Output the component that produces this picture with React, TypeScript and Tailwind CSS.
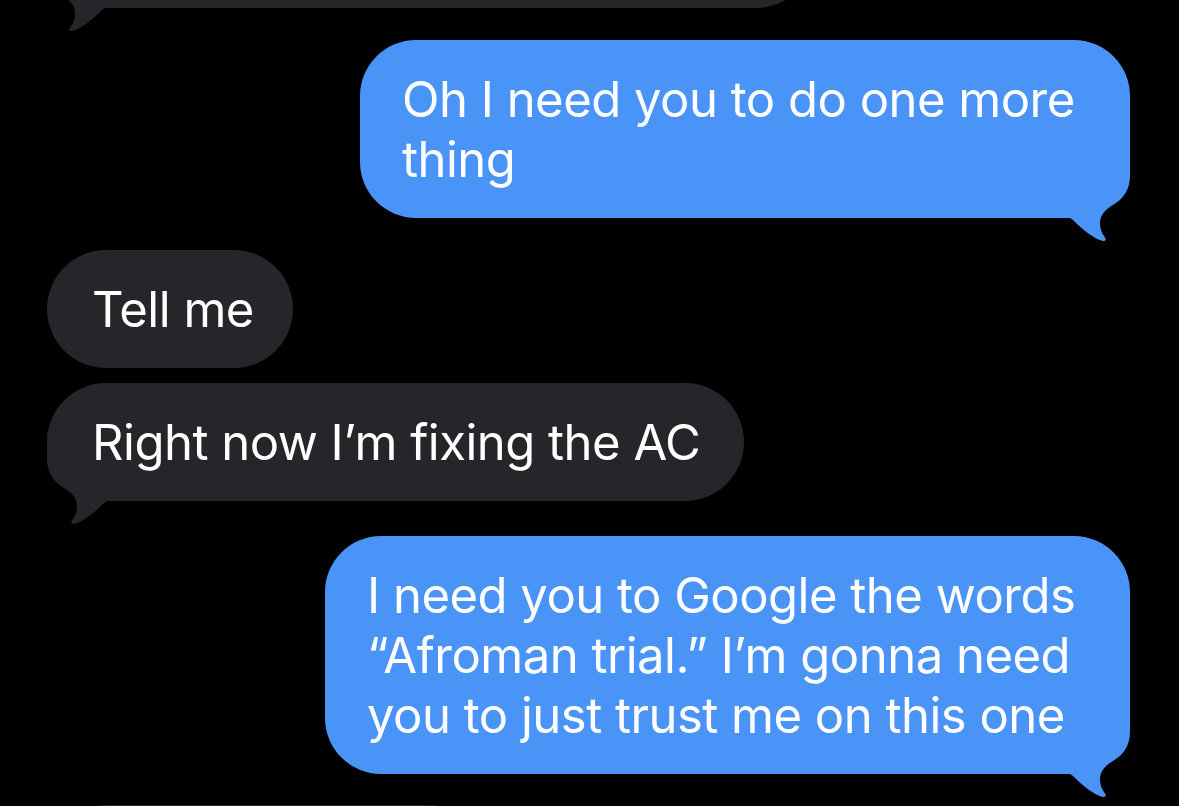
function Tail({ side, color }: { side: 'left' | 'right'; color: string }) {
  return (
    <svg
      width="60"
      height="92"
      viewBox="0 0 60 92"
      className={side === 'right' ? 'absolute right-0 bottom-[-24px]' : 'absolute left-0 bottom-[-24px]'}
    >
      <g transform={side === 'left' ? 'translate(60 0) scale(-1 1)' : 'translate(0 0)'}>
        <path
          d="M0 0 L60 0 L60 26 C60 40 53 49 43 55 C36 59 30 65 30 73 C30 79 32 84 35 87.5 C36.5 89.5 35.5 91.5 33 91 C24 89 13 80 3 70 L0 68 Z"
          fill={color}
        />
      </g>
    </svg>
  )
}

const BLUE = '#4a94f7'
const GRAY = '#262529'

function Sent({ lines, width, className = '' }: { lines: string[]; width: string; className?: string }) {
  return (
    <div className={`relative self-end ${width} ${className}`}>
      <div className="relative z-10 rounded-[56px] bg-[#4a94f7] px-[42px] pt-[30px] pb-[28px] text-white">
        {lines.map((l) => (
          <div key={l} className="whitespace-nowrap">{l}</div>
        ))}
      </div>
      <Tail side="right" color={BLUE} />
    </div>
  )
}

function Received({ text, width, tail, className = '' }: { text?: string; width: string; tail?: boolean; className?: string }) {
  return (
    <div className={`relative self-start ${width} ${className}`}>
      <div className="relative z-10 h-[118px] rounded-[59px] bg-[#262529] px-[45px] pt-[30px] pb-[28px] text-white whitespace-nowrap">
        {text}
      </div>
      {tail && <Tail side="left" color={GRAY} />}
    </div>
  )
}

export default function App() {
  return (
    <div
      className="h-[806px] w-[1179px] overflow-hidden bg-black text-[49px] leading-[60px] tracking-[-0.5px]"
      style={{ fontFamily: 'Inter, "Noto Sans", sans-serif' }}
    >
      <div className="mt-[-110px] flex flex-col pl-[45px] pr-[49px]">
        {/* previous message, cut off at the top */}
        <Received width="w-[770px]" tail />
        <Sent
          lines={['Oh I need you to do one more', 'thing']}
          width="w-[770px]"
          className="mt-[32px]"
        />
        <Received text="Tell me" width="w-[246px]" className="mt-[32px] ml-[2px]" />
        <Received text="Right now I’m fixing the AC" width="w-[697px]" tail className="mt-[15px] ml-[2px]" />
        <Sent
          lines={['I need you to Google the words', '“Afroman trial.” I’m gonna need', 'you to just trust me on this one']}
          width="w-[805px]"
          className="mt-[35px]"
        />
        {/* next message, cut off at the bottom */}
        <Received width="w-[440px]" className="mt-[31px] ml-[2px]" />
      </div>
    </div>
  )
}
